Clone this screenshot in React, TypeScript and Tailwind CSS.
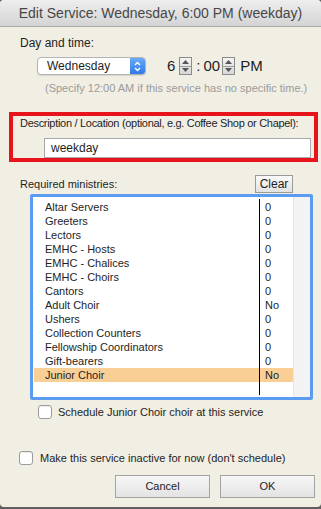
const ministries: [string, string][] = [
  ["Altar Servers", "0"],
  ["Greeters", "0"],
  ["Lectors", "0"],
  ["EMHC - Hosts", "0"],
  ["EMHC - Chalices", "0"],
  ["EMHC - Choirs", "0"],
  ["Cantors", "0"],
  ["Adult Choir", "No"],
  ["Ushers", "0"],
  ["Collection Counters", "0"],
  ["Fellowship Coordinators", "0"],
  ["Gift-bearers", "0"],
  ["Junior Choir", "No"],
];

const Spinner = () => (
  <div className="flex h-[18px] w-[13px] flex-col border border-[#8c8c8c] bg-gradient-to-b from-[#f4f4f4] to-[#d8d8d8]">
    <div className="flex flex-1 items-center justify-center border-b border-[#9a9a9a]">
      <svg width="7" height="4" viewBox="0 0 7 4"><path d="M3.5 0L7 4H0z" fill="#555" /></svg>
    </div>
    <div className="flex flex-1 items-center justify-center">
      <svg width="7" height="4" viewBox="0 0 7 4"><path d="M0 0h7L3.5 4z" fill="#555" /></svg>
    </div>
  </div>
);

const Checkbox = () => (
  <div className="h-[14px] w-[14px] rounded-[3px] border border-[#9d9d9d] bg-white shadow-[inset_0_1px_1px_rgba(0,0,0,0.08)]" />
);

export default function App() {
  return (
    <div className="h-[509px] w-[321px] bg-[#5f5f5f] font-['Liberation_Sans',Arial,sans-serif] text-[#1e1e1e]">
      <div className="flex h-[507px] flex-col overflow-hidden rounded-[4px] bg-[#f1eee4]">
        {/* title bar */}
        <div className="flex h-[27px] shrink-0 items-center justify-center border-b border-[#a9a9a9] bg-gradient-to-b from-[#eeeeee] to-[#d4d4d4] text-[14px] text-[#474747]">
          Edit Service: Wednesday, 6:00 PM (weekday)
        </div>

        <div className="ml-[20px] mt-[9px] h-[14px] text-[12px] leading-[14px]">Day and time:</div>

        <div className="mt-[7px] flex h-[18px] items-center">
          <div className="ml-[37px] flex h-[18px] w-[109px] overflow-hidden rounded-[4px] border border-[#b3b3b3] bg-white shadow-[0_1px_1px_rgba(0,0,0,0.1)]">
            <div className="flex-1 pl-[9px] text-[12px] leading-[16px]">Wednesday</div>
            <div className="flex w-[15px] items-center justify-center bg-gradient-to-b from-[#6aa9f7] to-[#2f78e8]">
              <svg width="7" height="11" viewBox="0 0 7 11" fill="none" stroke="white" strokeWidth="1.4">
                <path d="M1 4L3.5 1.5L6 4" />
                <path d="M1 7L3.5 9.5L6 7" />
              </svg>
            </div>
          </div>
          <span className="ml-[21px] text-[15px] leading-[18px]">6</span>
          <div className="ml-[4px]"><Spinner /></div>
          <span className="ml-[4px] text-[15px] leading-[18px]">:</span>
          <span className="ml-[3px] text-[15px] leading-[18px]">00</span>
          <div className="ml-[2px]"><Spinner /></div>
          <span className="ml-[5px] text-[15px] leading-[18px]">PM</span>
        </div>

        <div className="ml-[45px] mt-[7px] h-[13px] text-[11px] leading-[13px] text-[#9b9b9b]">
          (Specify 12:00 AM if this service has no specific time.)
        </div>

        {/* description box */}
        <div className="ml-[9px] mt-[17px] h-[50px] w-[309px] border-4 border-[#e8141b]">
          <div className="ml-[7px] h-[14px] text-[11px] leading-[14px] tracking-[-0.3px]">
            Description / Location (optional, e.g. Coffee Shop or Chapel):
          </div>
          <div className="ml-[31px] mt-[8px] flex h-[20px] w-[267px] items-center border border-[#a9a9a9] bg-white pl-[6px] text-[12px]">
            weekday
          </div>
        </div>

        <div className="mt-[13px] flex h-[18px] items-center">
          <span className="ml-[20px] text-[11px]">Required ministries:</span>
          <div className="ml-auto mr-[28px] flex h-[18px] w-[38px] items-center justify-center border border-[#9a9a9a] bg-gradient-to-b from-[#fafafa] to-[#e2e2e2] text-[12px]">
            Clear
          </div>
        </div>

        {/* ministries list */}
        <div className="ml-[30px] mt-[1px] flex h-[206px] w-[283px] rounded-[2px] border-[3px] border-[#5b9cf0] bg-white">
          <div className="flex w-[260px] py-[2px]">
            <div className="flex w-[226px] flex-col pl-[1px] pt-[1px]">
              {ministries.map(([name, value]) => (
                <div
                  key={name}
                  className={`h-[14px] pl-[11px] text-[11px] leading-[14px] ${value && name === "Junior Choir" ? "bg-[#f9cf96]" : ""}`}
                >
                  {name}
                </div>
              ))}
            </div>
            <div className="flex flex-1 flex-col border-l border-black pt-[1px]">
              {ministries.map(([name, value]) => (
                <div
                  key={name}
                  className={`h-[14px] pl-[5px] text-[11px] leading-[14px] ${name === "Junior Choir" ? "bg-[#f9cf96]" : ""}`}
                >
                  {value}
                </div>
              ))}
            </div>
          </div>
          <div className="flex-1 border-l border-[#e6e6e6] bg-[#f3f3f3]" />
        </div>

        <div className="ml-[38px] mt-[5px] flex h-[14px] items-center gap-[6px] text-[11px]">
          <Checkbox />
          <span>Schedule Junior Choir choir at this service</span>
        </div>

        <div className="ml-[19px] mt-[32px] flex h-[14px] items-center gap-[7px] text-[11px]">
          <Checkbox />
          <span>Make this service inactive for now (don't schedule)</span>
        </div>

        <div className="ml-[115px] mt-[10px] flex gap-[10px]">
          <div className="flex h-[23px] w-[95px] items-center justify-center border border-[#a3a3a3] bg-gradient-to-b from-[#f7f7f7] to-[#e3e3e3] text-[11px]">
            Cancel
          </div>
          <div className="flex h-[23px] w-[95px] items-center justify-center border border-[#a3a3a3] bg-gradient-to-b from-[#f7f7f7] to-[#e3e3e3] text-[11px]">
            OK
          </div>
        </div>
      </div>
    </div>
  );
}
